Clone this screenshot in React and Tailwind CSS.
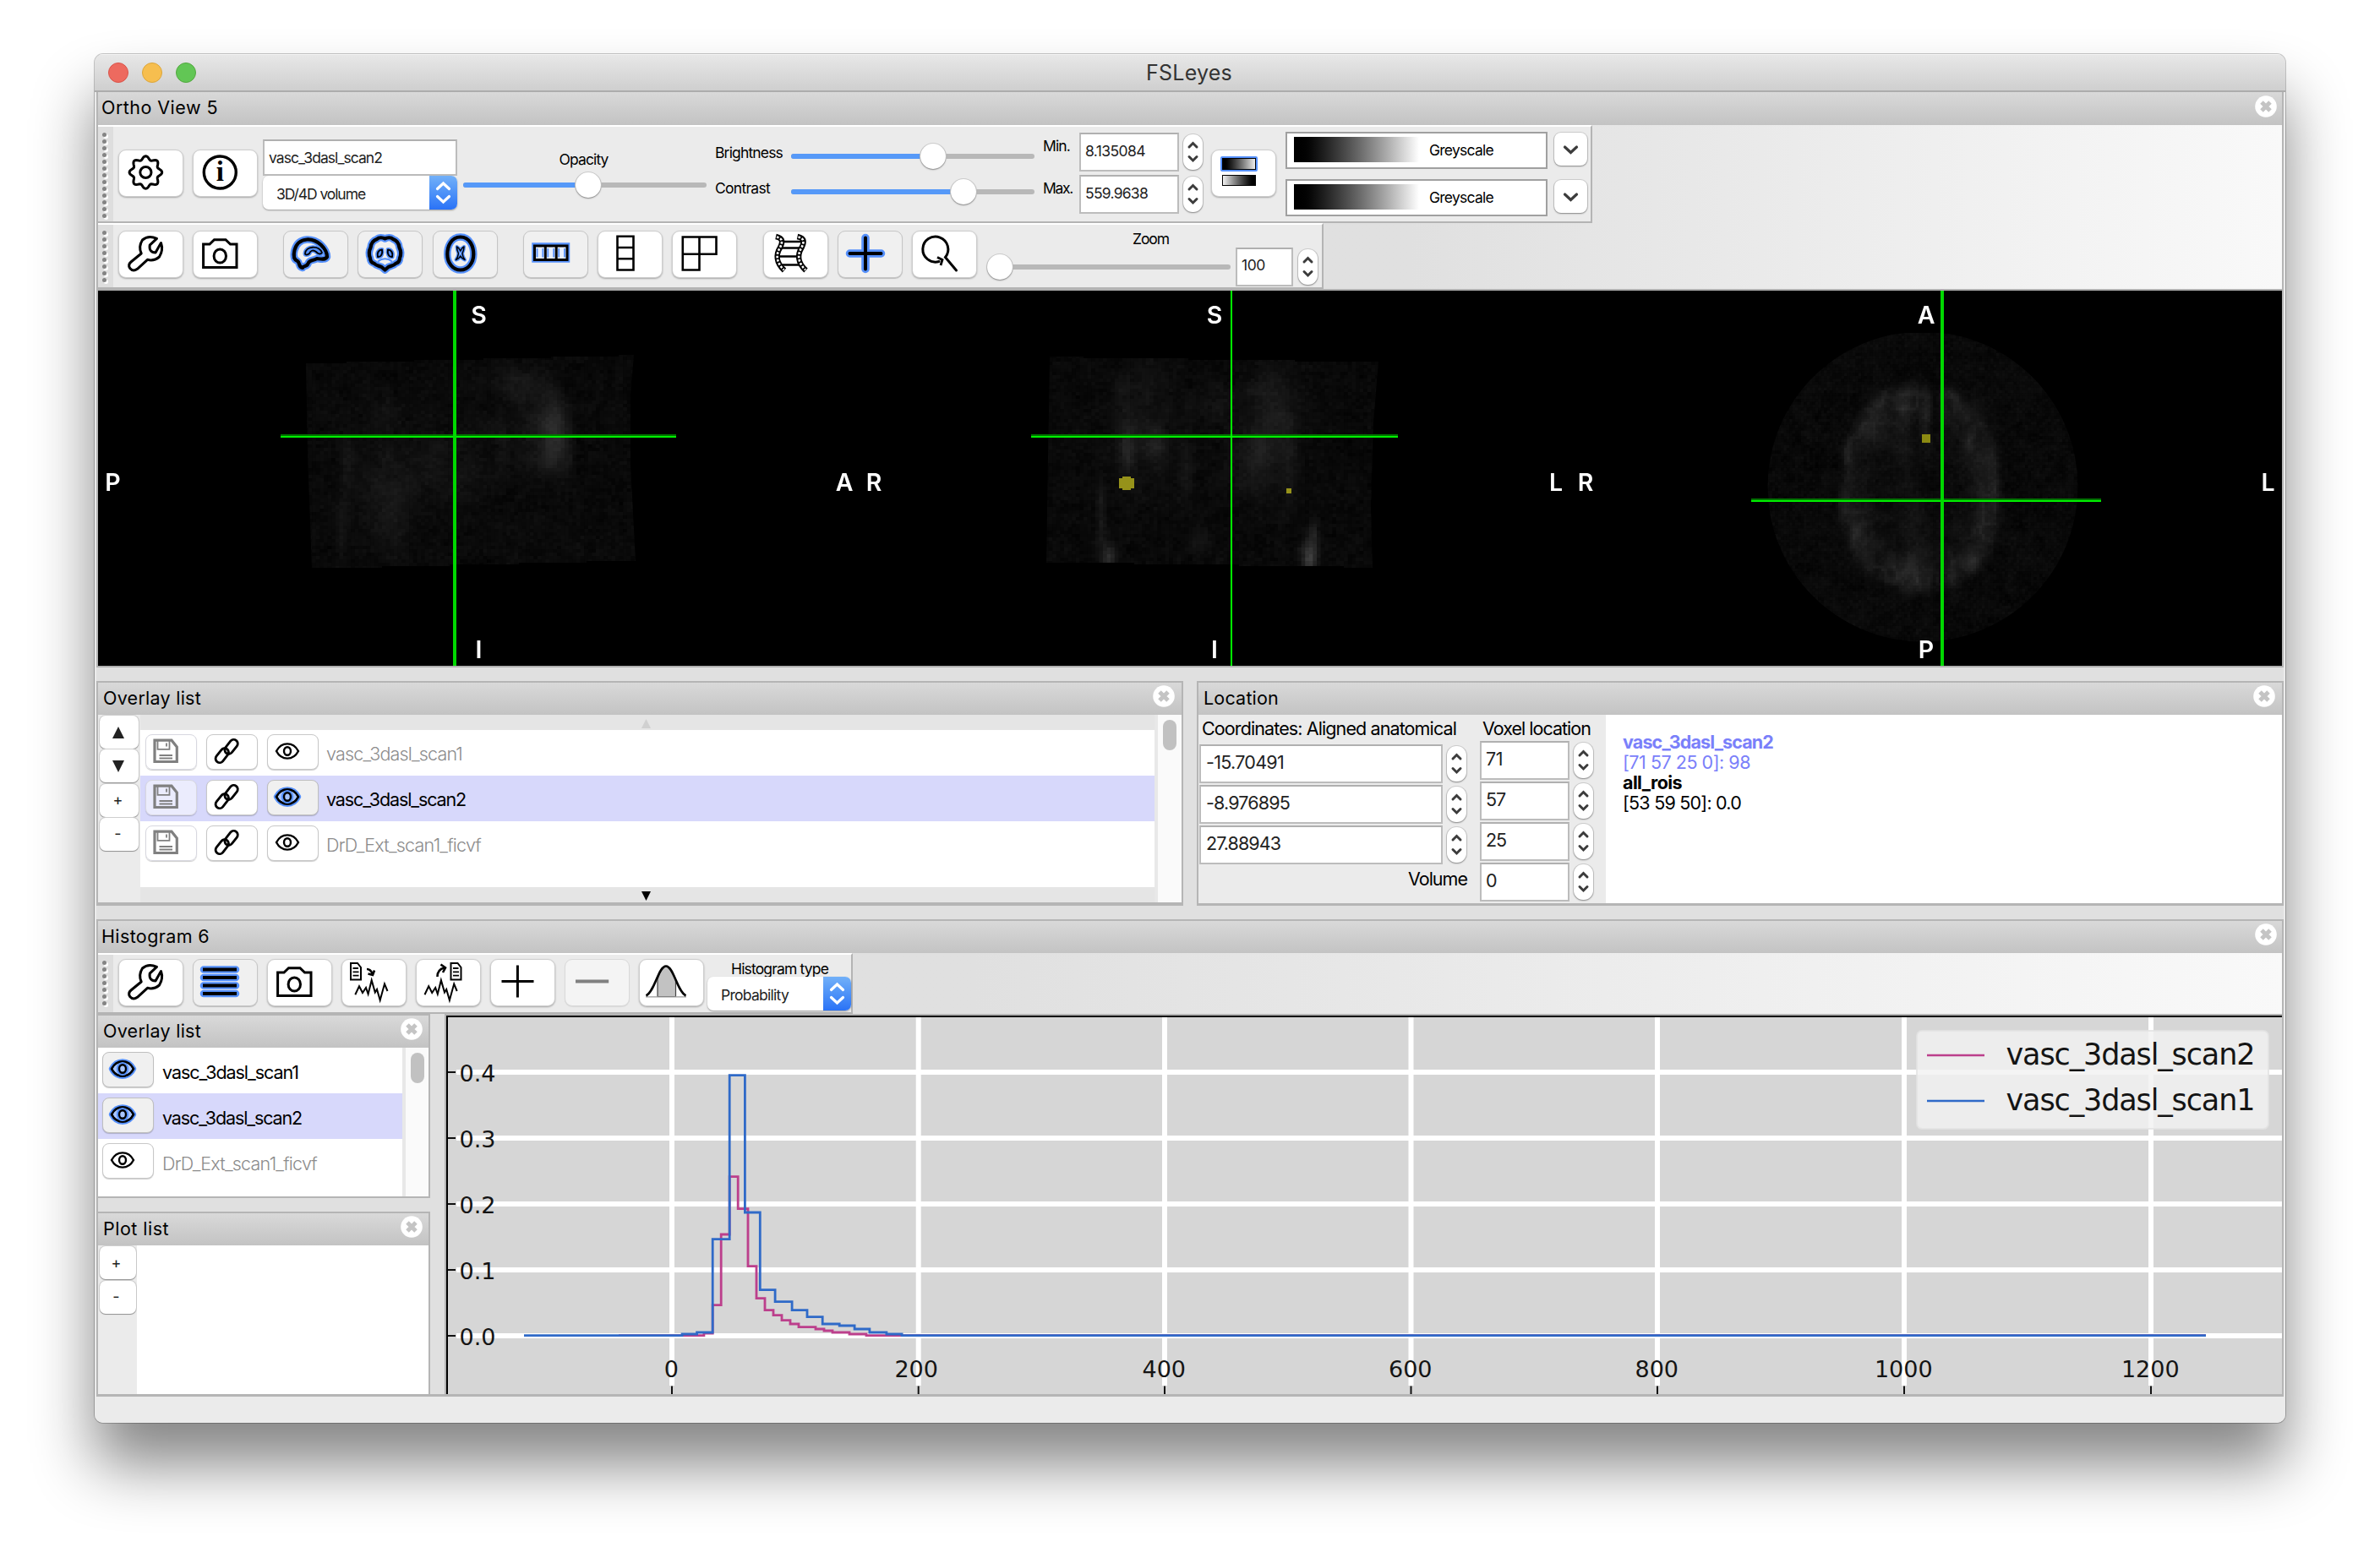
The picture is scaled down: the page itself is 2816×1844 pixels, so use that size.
import { useLayoutEffect, useEffect, useRef, useState } from "react";

const BLUE = "#5590fb";

/* Text that tracks its letters to a given ink width. */
function T({ w, className = "", children }) {
  const ref = useRef(null);
  const [ls, setLs] = useState(0);
  useLayoutEffect(() => {
    const n = String(children).length;
    const natural = ref.current.getBoundingClientRect().width - ls * n;
    if (w) setLs((w - natural) / n);
  }, [w, children]);
  return (
    <span ref={ref} className={"inline-block whitespace-nowrap leading-none " + className} style={{ letterSpacing: ls + "px" }}>
      {children}
    </span>
  );
}

function Close({ className = "" }) {
  return (
    <svg viewBox="0 0 26 26" className={"h-[26px] w-[26px] shrink-0 " + className}>
      <circle cx="13" cy="13" r="12.8" fill="#fff" />
      <path d="M8 8l10 10M18 8l-10 10" stroke="#c4c4c4" strokeWidth="5" strokeLinecap="butt" />
    </svg>
  );
}

function Header({ title, w, className = "", closeClass = "" }) {
  return (
    <div className={"flex shrink-0 items-center justify-between bg-gradient-to-b from-[#d9d9d9] to-[#c3c3c3] text-[21.5px] text-black " + className}>
      <T w={w} className="mb-[1px]">{title}</T>
      <Close className={closeClass} />
    </div>
  );
}

function Grip({ n }) {
  return (
    <div className="flex w-[18px] shrink-0 flex-col items-center self-stretch overflow-hidden bg-[#dedede] pt-[7px]">
      {Array.from({ length: n }, (_, i) => (
        <div key={i} className="h-[8px] w-[8px] shrink-0">
          <div className="h-[5px] w-[5px] rounded-full bg-[#848484] shadow-[2px_2px_0_#fff]" />
        </div>
      ))}
    </div>
  );
}

function Btn({ children, on, off, className = "" }) {
  const tone = off ? "bg-[#f4f4f4] border-[#d9d9d9] shadow-[0_1px_1px_rgba(0,0,0,0.08)]" : on ? "bg-[#f0f0f0] border-[#c6c6c6] shadow-[0_1px_1px_rgba(0,0,0,0.2)]" : "bg-white border-[#cdcdcd] shadow-[0_1px_2px_rgba(0,0,0,0.3)]";
  return (
    <div className={"h-[56px] w-[77px] shrink-0 rounded-[9px] border " + tone + " " + className}>
      <svg viewBox="1 1 75 54" className="h-[54px] w-[75px]" fill="none" stroke="#000" strokeWidth="3">
        {children}
      </svg>
    </div>
  );
}

/* A black stroke lying on a wider blue one, for toggled-on icons. */
function Glow({ d, w = 4, halo = 8.5, cap = "round" }) {
  return (
    <>
      <path d={d} stroke={BLUE} strokeWidth={halo} strokeLinejoin="round" strokeLinecap={cap} />
      <path d={d} strokeWidth={w} strokeLinejoin="round" strokeLinecap={cap} />
    </>
  );
}

const gear = Array.from({ length: 96 }, (_, i) => {
  const a = (i / 96) * Math.PI * 2;
  const r = 17.2 + 2.1 * Math.cos(8 * a);
  return (32.4 + r * Math.sin(a)).toFixed(2) + "," + (27 - r * Math.cos(a)).toFixed(2);
}).join(" ");

const Wrench = () => (
  <path strokeLinejoin="round" d="M45.5 9.3L37.2 17.2Q36 25.5 44 26L50.5 14.5Q53.5 23 48.5 31Q42 36.5 34.5 34.3L22.5 45.3Q17.5 49 13.7 44.5Q11 40.5 15 37L27.2 27Q23.5 19 28.5 11Q35.5 5 45.5 9.3Z" />
);
const Camera = () => (
  <>
    <path d="M12.6 16H20L25.5 10.7H39L44.5 16H52V43.5H12.6Z" />
    <ellipse cx="32.3" cy="30" rx="7.2" ry="8" />
  </>
);

const wave = "M16.3 42.2L21 32.2L25 40L29 34L31.6 41.5L35.7 25.2L39.8 39.5L42 36L45.7 48.8L51 29.5L54.5 38";

function Doc({ x }) {
  return (
    <g transform={"translate(" + x + " 0)"} strokeWidth="2">
      <path d="M1 5H9L13 10V24.5H1Z" />
      <path d="M3.5 11H10M3.5 15.3H10.5M3.5 19.6H10.5" strokeWidth="1.8" />
    </g>
  );
}

function Chev({ className = "" }) {
  return (
    <svg viewBox="0 0 23 42" className={"h-[42px] w-[23px] shrink-0 rounded-[11px] bg-white shadow-[0_1px_2px_rgba(0,0,0,0.35),0_0_0_1px_#cfcfcf] " + className} fill="none" stroke="#3c3c3c" strokeWidth="3">
      <path d="M7 15L11.5 10.5L16 15M7 26.5L11.5 31L16 26.5" strokeLinecap="round" />
    </svg>
  );
}

function Field({ text, w, size = "text-[21.5px]", pad = "pl-[7px] pb-[4px]", h = "h-[46px]", className = "" }) {
  return (
    <div className={"flex shrink-0 items-center border-2 border-[#bcbcbc] border-t-[#b0b0b0] bg-white text-[#222] " + h + " " + size + " " + pad + " " + className}>
      <T w={w}>{text}</T>
    </div>
  );
}

function Slider({ pos, className = "" }) {
  return (
    <div className={"relative flex h-[32px] shrink-0 items-center " + className}>
      <div className="flex h-[6px] w-full overflow-hidden rounded-full bg-[#b8b8b8]">
        <div className="h-full bg-[#5699f8]" style={{ width: pos + "px" }} />
      </div>
      <div className="absolute top-[1px] h-[30px] w-[30px] -translate-x-1/2 rounded-full bg-white shadow-[0_1px_2px_rgba(0,0,0,0.35),0_0_0_1px_#cfcfcf]" style={{ left: pos + "px" }} />
    </div>
  );
}

function Select({ text, w, className = "" }) {
  return (
    <div className={"flex h-[40px] shrink-0 items-center overflow-hidden rounded-[7px] bg-white pl-[16px] text-[17.5px] text-[#222] shadow-[0_1px_2px_rgba(0,0,0,0.35)] " + className}>
      <T w={w} className="mt-[3px]">{text}</T>
      <svg viewBox="0 0 33 40" className="ml-auto h-[40px] w-[33px] bg-gradient-to-b from-[#72b0f8] to-[#2a72f6]" fill="none" stroke="#fff" strokeWidth="3.2">
        <path d="M9.5 15.5L16.5 9L23.5 15.5M9.5 24.5L16.5 31L23.5 24.5" strokeLinecap="round" />
      </svg>
    </div>
  );
}

function ColourRow({ className = "" }) {
  return (
    <div className={"flex " + className}>
      <div className="flex h-[44px] w-[310px] items-center border-2 border-[#a0a0a0] bg-white pl-[8px] text-[17.5px] text-black">
        <div className="mb-[2px] h-[30px] w-[148px] bg-gradient-to-r from-black to-white" />
        <T w={76} className="ml-[12px]">Greyscale</T>
      </div>
      <svg viewBox="0 0 39 39" className="ml-[8px] mt-[1px] h-[39px] w-[39px] rounded-[8px] bg-white shadow-[0_1px_2px_rgba(0,0,0,0.35),0_0_0_1px_#cfcfcf]" fill="none" stroke="#3c3c3c" strokeWidth="3.2">
        <path d="M12.5 17L19.5 23.5L26.5 17" strokeLinecap="round" />
      </svg>
    </div>
  );
}

/* ---------- list pieces ---------- */
function SmallBtn({ on, faded, className = "", children }) {
  const tone = faded ? "border-[#d8d8e0] bg-white/50" : on ? "border-[#bfbfbf] bg-[#f0f0f0]" : "border-[#c8c8c8] bg-white";
  return (
    <div className={"h-[42px] w-[61px] shrink-0 rounded-[8px] border shadow-[0_1px_1px_rgba(0,0,0,0.2)] " + tone + " " + className}>
      <svg viewBox="1 1 59 40" className="h-[40px] w-[59px]" fill="none" stroke="#000" strokeWidth="2.4">
        {children}
      </svg>
    </div>
  );
}
const almond = "M11 20C17 8.5 31 8.5 37 20C31 31.5 17 31.5 11 20Z";
function EyeBtn({ on, className }) {
  return (
    <SmallBtn on={on} className={className}>
      {on && <path d={almond} fill={BLUE} stroke={BLUE} strokeWidth="6.5" strokeLinejoin="round" />}
      {on && <path d={almond} fill="#a9c6ff" />}
      <path d={almond} />
      {on && <ellipse cx="24" cy="20" rx="4.2" ry="5" stroke={BLUE} strokeWidth="6" />}
      <ellipse cx="24" cy="20" rx="4" ry="4.8" fill={on ? "#a9c6ff" : "none"} />
    </SmallBtn>
  );
}
function SaveBtn() {
  return (
    <SmallBtn faded className="ml-[6px]">
      <g stroke="#808080">
        <path d="M11 7.2H31L37.3 15V32.5H11Z" strokeWidth="3.2" />
        <path d="M14.5 7V17.8H28.5V7" strokeWidth="1.8" />
        <path d="M25 10.5V14.5M16.5 25H32M16.5 28.5H32" strokeWidth="1.8" />
      </g>
    </SmallBtn>
  );
}
function LinkBtn() {
  return (
    <SmallBtn className="ml-[11px]">
      <g strokeWidth="2.8">
        <rect x="-9.5" y="-4.8" width="19" height="9.6" rx="4.8" transform="translate(18.8 25.2) rotate(-52)" />
        <rect x="-9.5" y="-4.8" width="19" height="9.6" rx="4.8" transform="translate(29.6 14.8) rotate(-52)" />
      </g>
    </SmallBtn>
  );
}

function MiniBtn({ children, w = "w-[46px]" }) {
  return (
    <div className={"flex h-[39px] shrink-0 items-center justify-center rounded-[7px] bg-white pr-[3px] text-[18px] leading-none text-[#222] shadow-[0_1px_1px_rgba(0,0,0,0.3),0_0_0_1px_#cfcfcf] " + w}>
      {children}
    </div>
  );
}
function Tri({ down, className = "" }) {
  return (
    <svg viewBox="0 0 14 14" className={className} fill="currentColor">
      <path d={down ? "M0 0H14L7 14Z" : "M0 14H14L7 0Z"} />
    </svg>
  );
}

const items = [
  { name: "vasc_3dasl_scan1", w: 161 },
  { name: "vasc_3dasl_scan2", w: 165, sel: true },
  { name: "DrD_Ext_scan1_ficvf", w: 183 },
];

/* ---------- image slices ---------- */
function rng(seed) {
  let s = seed;
  return () => ((s = (s * 1664525 + 1013904223) >>> 0) / 4294967296);
}
/* Smooth value noise on a lattice with cells sx by sy. */
function smooth(seed, sx, sy) {
  const r = rng(seed);
  const t = Array.from({ length: 4096 }, () => r() - 0.5);
  const at = (i, j) => t[(i * 73 + j * 179) & 4095];
  const ease = (q) => q * q * (3 - 2 * q);
  return (x, y) => {
    const u = x / sx, v = y / sy, i = Math.floor(u), j = Math.floor(v), a = ease(u - i), b = ease(v - j);
    return (at(i, j) * (1 - a) + at(i + 1, j) * a) * (1 - b) + (at(i, j + 1) * (1 - a) + at(i + 1, j + 1) * a) * b;
  };
}
const blobs = (list) => (x, y) => list.reduce((t, [cx, cy, sx, sy, v]) => t + v * Math.exp(-(((x - cx) / sx) ** 2 + ((y - cy) / sy) ** 2) / 2), 0);

const sagittalBase = blobs([
  [656, 506, 10, 26, 22], [638, 495, 22, 36, 12], [664, 530, 14, 20, 10], [650, 545, 18, 12, 9], [610, 458, 22, 12, 6], [594, 525, 5, 22, 9], [600, 450, 26, 12, 5], [470, 560, 30, 40, 8], [455, 590, 22, 30, 6],
  [465, 625, 12, 22, 9], [412, 545, 6, 22, 9], [405, 625, 5, 30, 10], [550, 565, 18, 22, 9], [515, 540, 12, 30, 7], [570, 510, 20, 10, 7], [455, 490, 12, 14, 7],
]);
/* The skull edge falls off sharply on the right of the bright lobe. */
const sagittal = (x, y) => {
  const edge = 682 - ((y - 520) / 11) ** 2 * 0.55;
  const k = x > 600 ? 1 / (1 + Math.exp((x - edge) / 2)) : 1;
  return sagittalBase(x, y) * k;
};
const coronal = blobs([
  [1334, 530, 6, 25, 22], [1368, 525, 9, 13, 18], [1352, 500, 26, 50, 10], [1303, 608, 4, 30, 16], [1312, 660, 6, 10, 34], [1549, 662, 6, 16, 50], [1555, 635, 4, 16, 18],
  [1508, 485, 16, 34, 16], [1490, 538, 12, 26, 14], [1525, 545, 8, 40, 12], [1475, 555, 22, 26, 9], [1404, 558, 6, 30, 12], [1440, 480, 20, 18, 8], [1480, 462, 14, 8, 10], [1420, 640, 8, 14, 7], [1325, 465, 5, 12, 7],
]);
const extra = blobs([
  [2266, 640, 12, 40, 9], [2262, 680, 14, 14, 14], [2253, 525, 7, 40, 7], [2279, 500, 5, 24, 16], [2263, 462, 8, 5, 12], [2253, 480, 5, 14, 14], [2306, 464, 8, 6, 14], [2317, 478, 5, 12, 14],
  [2384, 634, 6, 5, 12], [2332, 664, 7, 8, 16], [2213, 512, 16, 10, 14], [2222, 482, 12, 12, 10], [2187, 540, 4, 18, 12], [2182, 600, 5, 14, 14], [2194, 640, 8, 24, 14], [2160, 567, 4, 7, 7],
  [2350, 620, 14, 36, 10], [2330, 524, 5, 14, 14], [2342, 478, 10, 6, 14], [2353, 500, 6, 16, 12], [2361, 560, 6, 40, 10], [2312, 686, 5, 14, 14], [2345, 545, 12, 14, 8],
]);
const foldNoise = smooth(91, 13, 17);
const patch = smooth(17, 12, 12);
function axial(x, y) {
  const dx = Math.abs(x - 2272) / 98;
  const dy = Math.abs(y - 578) / 128;
  const d = (dx ** 2.3 + dy ** 2.3) ** (1 / 2.3) + 0.07 * foldNoise(x * 0.8 + 300, y * 0.8);
  const inside = 1 / (1 + Math.exp((d - 0.96) / 0.02));
  const ridge = Math.max(0, 1 - Math.abs(foldNoise(x, y)) * 5);
  const cleft = Math.exp(-(((x - 2290) / 6) ** 2)) * (y < 520 ? 1 : 0.4);
  const rim = Math.exp(-(((d - 0.84) / 0.16) ** 2) / 2);
  return inside * (1 - cleft) * (1.5 + rim * 9 + ridge * (2.5 + rim * 7) + extra(x, y) * 0.9) + (inside < 0.5 ? extra(x, y) * 0.3 : 0);
}

const slices = [
  { f: sagittal, cw: 4.6, ch: 4, box: [360, 418, 756, 674], seed: 7, poly: [[362, 430], [410, 430], [410, 428], [490, 428], [490, 426], [572, 426], [572, 424], [652, 424], [652, 422], [732, 422], [732, 420], [750, 420], [746, 470], [746, 550], [752, 664], [694, 664], [694, 666], [614, 666], [614, 668], [532, 668], [532, 670], [452, 670], [452, 672], [369, 672], [364, 540]] },
  { f: coronal, cw: 4.6, ch: 4, box: [1236, 420, 1634, 674], seed: 21, poly: [[1242, 422], [1282, 422], [1282, 424], [1406, 424], [1406, 426], [1532, 426], [1532, 428], [1631, 428], [1625, 500], [1622, 600], [1624, 672], [1590, 672], [1590, 670], [1466, 670], [1466, 668], [1342, 668], [1342, 666], [1238, 666], [1240, 540]] },
  { f: axial, cw: 3.4, ch: 3.4, box: [2090, 394, 2462, 760], seed: 33, circle: [2275, 576, 183.5] },
];

function Slices() {
  const ref = useRef(null);
  useEffect(() => {
    const g = ref.current.getContext("2d");
    g.setTransform(1, 0, 0, 1, 0, 0);
    g.fillStyle = "#000";
    g.fillRect(0, 0, 2584, 444);
    g.translate(-116, -344);
    slices.forEach(({ f, cw, ch, box, seed, poly, circle }) => {
      const r = rng(seed);
      g.save();
      g.beginPath();
      if (poly) poly.forEach(([x, y], i) => (i ? g.lineTo(x, y) : g.moveTo(x, y)));
      else g.arc(circle[0], circle[1], circle[2], 0, Math.PI * 2);
      g.clip();
      for (let y = box[1]; y < box[3]; y += ch)
        for (let x = box[0]; x < box[2]; x += cw) {
          const v = Math.round(9 + (r() + r() - 1) * 5 + patch(x, y) * 6 + f(x + cw / 2, y + ch / 2));
          g.fillStyle = "rgb(" + v + "," + v + "," + v + ")";
          g.fillRect(x, y, cw + 0.6, ch + 0.6);
        }
      g.restore();
    });
  }, []);
  const letters = [
    ["S", 566.5, 383], ["P", 133.5, 580.5], ["A", 999, 581], ["I", 566.5, 778.5],
    ["R", 1034, 581], ["S", 1437, 383], ["L", 1841, 581], ["I", 1437, 778.5],
    ["R", 1876, 581], ["A", 2279, 383], ["P", 2279, 778.5], ["L", 2683.5, 581],
  ];
  return (
    <div className="relative h-[444px] w-[2584px] shrink-0 bg-black">
      <canvas ref={ref} width="2584" height="444" className="block" />
      <svg viewBox="116 344 2584 444" className="absolute inset-0 h-[444px] w-[2584px]">
        <g fill="#96921a">
          <path d="M1328 564H1338V566H1342V578H1338V580H1328V578H1324V566H1328Z" />
          <rect x="1522" y="578" width="6" height="6" />
          <rect x="2274" y="514" width="10" height="10" fill="#8c8a12" />
        </g>
        <g fill="#007400">
          <rect x="332" y="514" width="468" height="2" />
          <rect x="1220" y="514" width="434" height="2" />
          <rect x="2072" y="590" width="414" height="2" />
        </g>
        <g fill="#00f000">
          <rect x="332" y="516" width="468" height="2" />
          <rect x="1220" y="516" width="434" height="2" />
          <rect x="2072" y="592" width="414" height="2" />
          <rect x="1456" y="344" width="2" height="444" fill="#00ff00" />
        </g>
        <g fill="#00d800">
          <rect x="536" y="344" width="4" height="444" />
          <rect x="2296" y="344" width="4" height="444" />
        </g>
        <g fill="#fff" textAnchor="middle" className="font-['Inter'] text-[28.5px] font-semibold">
          {letters.map(([c, x, y], i) => (
            <text key={i} x={x} y={y}>{c}</text>
          ))}
        </g>
      </svg>
    </div>
  );
}

/* ---------- histogram ---------- */
const path = (x0, steps, end) => {
  let y = 1142;
  let d = "M" + x0 + " 1580.7";
  steps.forEach(([x, ny]) => {
    const X = (600 + x / 2.8).toFixed(1);
    d += "L" + X + " " + (1200 + y / 3).toFixed(1) + "L" + X + " " + (1200 + ny / 3).toFixed(1);
    y = ny;
  });
  return d + "H" + end;
};
const blueD = path(620, [[580, 1137], [629, 1131], [681, 800], [737, 218], [788, 705], [838, 980], [888, 1022], [944, 1052], [994, 1076], [1045, 1101], [1101, 1107], [1151, 1119], [1201, 1131], [1257, 1137], [1308, 1142]], 2610);
const pinkD = path(732, [[652, 1134], [681, 1034], [709, 783], [737, 578], [765, 692], [798, 896], [826, 1010], [854, 1052], [882, 1070], [910, 1088], [938, 1101], [966, 1112], [1022, 1119], [1050, 1125], [1078, 1131], [1134, 1137], [1190, 1142]], 2610);

function Plot() {
  const xs = [[0, 795], [200, 1086.7], [400, 1378], [600, 1669.5], [800, 1961], [1000, 2253], [1200, 2545]];
  const ys = ["0.4", "0.3", "0.2", "0.1", "0.0"];
  return (
    <svg viewBox="528 1202 2172 448" className="h-[448px] w-[2172px] shrink-0 bg-[#d6d6d6] font-['DejaVu_Sans']">
      <g stroke="#fff" strokeWidth="6">
        {xs.map(([v, x]) => <path key={v} d={"M" + x + " 1204V1640"} />)}
        {ys.map((v, i) => <path key={v} d={"M540 " + (1269 + i * 78) + "H2700"} />)}
      </g>
      <g fill="none" strokeWidth="2.8">
        <path d={pinkD} stroke="#bc3f8c" />
        <path d={blueD} stroke="#2f6ac8" />
      </g>
      <g stroke="#111" strokeWidth="2">
        {xs.map(([v, x]) => <path key={v} d={"M" + x + " 1640.5V1650"} />)}
        {ys.map((v, i) => <path key={v} d={"M530 " + (1269 + i * 78) + "H539"} />)}
      </g>
      <g fill="#141414" className="text-[27px]">
        {xs.map(([v, x]) => <text key={v} x={v === 200 ? x - 2.5 : x - 0.7} y="1630" textAnchor="middle">{v}</text>)}
        {ys.map((v, i) => <text key={v} x="543.5" y={1280 + i * 78} textLength="43">{v}</text>)}
      </g>
      <rect x="2268" y="1220" width="416" height="116" rx="6" fill="#f2f2f2" fillOpacity="0.82" stroke="#e2e2e2" strokeOpacity="0.8" strokeWidth="2" />
      <path d="M2280 1249H2348" stroke="#bc3f8c" strokeWidth="2.6" />
      <path d="M2280 1303H2348" stroke="#2f6ac8" strokeWidth="2.6" />
      <g fill="#141414" className="text-[35px]">
        <text x="2373.5" y="1260" textLength="295">vasc_3dasl_scan2</text>
        <text x="2373.5" y="1314" textLength="295">vasc_3dasl_scan1</text>
      </g>
      <path d="M528 1203H2700M529 1202V1650" stroke="#000" strokeWidth="2" />
    </svg>
  );
}

export default function App() {
  return (
    <div className="h-[1844px] w-[2816px] overflow-hidden bg-white pl-[112px] pt-[64px] font-['Inter',sans-serif] text-black">
      <div className="flex h-[1620px] w-[2592px] flex-col overflow-hidden rounded-[10px] bg-[#ebebeb] shadow-[0_50px_72px_rgba(0,0,0,0.48),0_0_0_1px_rgba(0,0,0,0.22)]">
        {/* title bar */}
        <div className="flex h-[45px] shrink-0 items-center border-b-2 border-[#acacac] bg-gradient-to-b from-[#e8e8e8] to-[#cfcfcf] shadow-[inset_0_1px_0_#f4f4f4]">
          <div className="flex w-[400px] gap-[16px] pl-[16px]">
            <div className="h-[24px] w-[24px] rounded-full border border-[#d9544a] bg-[#ed6a5f]" />
            <div className="h-[24px] w-[24px] rounded-full border border-[#dba53a] bg-[#f6be4f]" />
            <div className="h-[24px] w-[24px] rounded-full border border-[#52a73f] bg-[#62c655]" />
          </div>
          <div className="flex flex-1 justify-center pr-[2px] pt-[2px] text-[25px] text-[#333]">
            <T w={102}>FSLeyes</T>
          </div>
          <div className="w-[400px]" />
        </div>

        <div className="mx-[2px] flex flex-1 flex-col bg-[#e0e0e0]">
          {/* ortho view */}
          <div className="flex flex-col border-x-2 border-[#b5b5b5]">
            <Header title="Ortho View 5" w={138} className="h-[39px] pl-[4px]" closeClass="mr-[6px] mb-[5px]" />
            <div className="flex flex-col bg-gradient-to-r from-[#e0e0e0] from-60% to-[#f9f9f9]">
              <div className="flex h-[116px] w-[1768px] items-start border-2 border-b-[#b4b4b4] border-l-0 border-r-[#b4b4b4] border-t-white bg-[#ebebeb]">
                <Grip n={13} />
                <Btn className="ml-[6px] mt-[27px]">
                  <polygon points={gear} />
                  <ellipse cx="32.4" cy="27" rx="6.6" ry="6.6" />
                </Btn>
                <Btn className="ml-[11px] mt-[27px]">
                  <circle cx="32.3" cy="27" r="19" strokeWidth="3.4" />
                  <text x="32.3" y="37.3" textAnchor="middle" stroke="none" fill="#000" className="font-['Liberation_Serif'] text-[33px] font-bold">i</text>
                </Btn>
                <div className="ml-[6px] mt-[15px] flex w-[230px] flex-col">
                  <Field text="vasc_3dasl_scan2" w={134} size="text-[17.5px]" pad="pl-[5px]" h="h-[43px]" />
                  <Select text="3D/4D volume" w={105} />
                </div>
                <div className="ml-[7px] mt-[28px] flex w-[288px] flex-col items-center text-[17.5px]">
                  <div className="flex h-[20px] items-center pr-[3px] pt-[1px]"><T w={58}>Opacity</T></div>
                  <Slider pos={148} className="mt-[5px] w-full" />
                </div>
                <div className="ml-[10px] mt-[20px] flex w-[90px] flex-col text-[17.5px]">
                  <div className="flex h-[22px] items-center"><T w={80}>Brightness</T></div>
                  <div className="mt-[20px] flex h-[22px] items-center"><T w={65}>Contrast</T></div>
                </div>
                <div className="mt-[19px] flex w-[288px] flex-col">
                  <Slider pos={168} className="w-full" />
                  <Slider pos={204} className="mt-[10px] w-full" />
                </div>
                <div className="ml-[10px] mt-[12px] flex w-[43px] flex-col text-[17.5px]">
                  <div className="flex h-[22px] items-center"><T w={32}>Min.</T></div>
                  <div className="mt-[28px] flex h-[22px] items-center"><T w={35}>Max.</T></div>
                </div>
                <div className="mt-[7px] flex w-[118px] flex-col gap-[4px]">
                  <Field text="8.135084" w={71} size="text-[17.5px]" pad="pl-[5px] pb-[3px]" />
                  <Field text="559.9638" w={74} size="text-[17.5px]" pad="pl-[5px] pb-[3px]" />
                </div>
                <div className="ml-[5px] mt-[9px] flex flex-col gap-[8px]">
                  <Chev />
                  <Chev />
                </div>
                <div className="ml-[10px] mt-[27px] h-[56px] w-[77px] rounded-[9px] border border-[#cdcdcd] bg-white pl-[10px] pt-[7px] shadow-[0_1px_2px_rgba(0,0,0,0.3)]">
                  <div className="h-[18px] w-[44px] rounded-[2px] border-2 border-[#5590fb] bg-[#5590fb]">
                    <div className="h-[14px] w-[40px] border border-black bg-gradient-to-r from-black to-[#eee]" />
                  </div>
                  <div className="ml-[2px] mt-[4px] h-[13px] w-[40px] border border-black bg-gradient-to-r from-[#f4f4f4] to-black" />
                </div>
                <div className="ml-[11px] mt-[6px] flex flex-col">
                  <ColourRow />
                  <ColourRow className="mt-[12px]" />
                </div>
              </div>

              <div className="flex h-[78px] w-[1450px] items-start border-2 border-b-[#b4b4b4] border-l-0 border-r-[#b4b4b4] border-t-white bg-[#ebebeb]">
                <Grip n={8} />
                <Btn className="ml-[6px] mt-[7px]"><Wrench /></Btn>
                <Btn className="ml-[11px] mt-[7px]"><Camera /></Btn>
                <Btn on className="ml-[30px] mt-[7px]">
                  <Glow d="M13.5 23C16 14 22 11 28 10.5C34 10 41 13 45 17C49 21 52 26 52 31C50 35 44 33.5 40 33C35 36 31 34 29.5 39C28 43 24 41 23 44C18 43 20 38 17 36C12 34 12 29 13.5 23Z" w={4.2} />
                  <Glow d="M26 27C27 18 42 17 46 26C44 29 41 27 39 25C35 22 32 24 31 27C29 29 26 29 26 27Z" w={1.8} halo={5} />
                </Btn>
                <Btn on className="ml-[11px] mt-[7px]">
                  <Glow d="M32.5 9.5C30 8 25.5 7.5 23 10C18.5 11.5 16 15.500 15.500 20C13.5 24 13.5 29 15 32.500C15 36 17 38 20 39C22.500 42 26 41.500 28.500 43L32.500 46.500L36.500 43C39 41.500 42.500 42 45 39C48 38 50 36 50 32.500C51.500 29 51.500 24 49.500 20C49 15.500 46.500 11.500 42 10C39.500 7.500 35 8 32.5 9.5Z" w={4.2} />
                  <path d="M24 36.500Q32.500 30 41 36.500" stroke={BLUE} strokeWidth="2" />
                  <Glow d="M24 31C22.500 26 25.500 22.500 29 22.500C30 27 28 31.500 24 31ZM41 31C42.500 26 39.500 22.500 36 22.500C35 27 37 31.500 41 31Z" w={2} halo={5} />
                </Btn>
                <Btn on className="ml-[12px] mt-[7px]">
                  <Glow d="M32.8 7.5C44 7.5 48.3 19 48.3 28C48.3 38 42 46.5 32.8 46.5C23.6 46.5 17.3 38 17.3 28C17.3 19 21.6 7.5 32.8 7.5Z" w={4.2} />
                  <Glow d="M28.500 19Q31.500 20.500 32.8 24Q34 20.500 37 19Q37 23 35 27Q35.500 31 38 34.500Q34.500 33.5 32.8 30Q31 33.5 27.500 34.5Q30 31 30.500 27Q28.500 23 28.500 19Z" w={1.5} halo={4} />
                </Btn>
                <Btn on className="ml-[30px] mt-[7px]">
                  <rect x="12" y="16" width="41.5" height="20" stroke={BLUE} strokeWidth="3.5" fill="#8fb5ff" />
                  <path d="M13.5 18H52V34.5H13.5ZM26.3 18V34.5M39.2 18V34.5" fill="#e8effd" strokeWidth="3" />
                  <path d="M16.5 21V31.5M23.3 21V31.5M29.3 21V31.5M36.2 21V31.5M42.2 21V31.5M49 21V31.5" stroke={BLUE} strokeWidth="1.8" />
                </Btn>
                <Btn className="ml-[11px] mt-[7px]">
                  <path d="M23.5 6.8H42.5V46.5H23.5ZM23.5 20H42.5M23.5 33.3H42.5" strokeWidth="2.6" />
                </Btn>
                <Btn className="ml-[11px] mt-[7px]">
                  <path d="M12.8 7.5H52.5V27.7H12.8ZM32.5 7.5V46.5H12.8V27.7" strokeWidth="2.6" />
                </Btn>
                <Btn className="ml-[31px] mt-[7px]">
                  <path d="M20 13H46M22 20.5H47M18 30.5H44M18 40.5H44" strokeWidth="2.6" />
                  {[0, 25.5].map((x) => (
                    <g key={x} transform={"translate(" + x + " 0)"}>
                      <path d="M15 7C24 9 23 14 20 20C15 28 15 38 25 47" strokeWidth="6.5" />
                      <path d="M16 7.5C24 9.5 22.5 14 20 20C15 28 15 37 24.5 46.5" stroke="#fff" strokeWidth="2.6" strokeDasharray="2.6 1.8" />
                    </g>
                  ))}
                </Btn>
                <Btn on className="ml-[11px] mt-[7px]">
                  <Glow d="M33 8.5V45.5M14.5 27H51.5" w={4} halo={9.5} />
                </Btn>
                <Btn className="ml-[11px] mt-[7px]">
                  <path d="M32 36.5A15 15 0 1 1 39.5 31.5L52.5 47" strokeLinecap="round" strokeWidth="3" />
                  <path d="M30 31.5L36 34.5L34 41" strokeWidth="2.8" />
                </Btn>
                <div className="ml-[10px] mt-[8px] flex w-[290px] flex-col text-[17.5px]">
                  <div className="flex h-[18px] items-center pl-[174px]"><T w={43}>Zoom</T></div>
                  <div className="pl-[2px]">
                    <div className="relative mt-[8px] flex h-[32px] items-center pl-[14px]">
                      <div className="h-[6px] w-[274px] rounded-full bg-[#b8b8b8]" />
                      <div className="absolute left-0 top-[1px] h-[30px] w-[30px] rounded-full bg-white shadow-[0_1px_2px_rgba(0,0,0,0.35),0_0_0_1px_#cfcfcf]" />
                    </div>
                  </div>
                </div>
                <Field text="100" w={28} size="text-[17.5px]" pad="pl-[5px] pb-[4px]" className="ml-[6px] mt-[27px] w-[68px]" />
                <Chev className="ml-[6px] mt-[29px]" />
              </div>
              <div className="h-[2px] w-full bg-[#b0b0b0]" />
            </div>
            <Slices />
            <div className="h-[2px] bg-[#b0b0b0]" />
          </div>

          {/* middle panels */}
          <div className="mt-[16px] flex h-[266px] shrink-0 justify-between">
            <div className="flex w-[1286px] flex-col border-2 border-b-4 border-[#b5b5b5]">
              <Header title="Overlay list" w={116} className="h-[38px] pl-[6px]" closeClass="mr-[8px] mb-[6px]" />
              <div className="flex flex-1 bg-[#ebebeb]">
                <div className="flex w-[50px] flex-col items-center gap-[1.3px] pt-[1px]">
                  <MiniBtn><Tri className="h-[14px] w-[14px]" /></MiniBtn>
                  <MiniBtn><Tri down className="h-[14px] w-[14px]" /></MiniBtn>
                  <MiniBtn>+</MiniBtn>
                  <MiniBtn>-</MiniBtn>
                </div>
                <div className="flex w-[1200px] flex-col bg-[#e5e5e5]">
                  <div className="flex h-[18px] items-center justify-center pr-[3px] pt-[3px] text-[#d0d0d0]"><Tri className="h-[11px] w-[11px]" /></div>
                  <div className="h-[186px] bg-white">
                    {items.map((it) => (
                      <div key={it.name} className={"flex h-[54px] items-start pt-[5px] " + (it.sel ? "bg-[#d7d8fb]" : "bg-white")}>
                        <SaveBtn />
                        <LinkBtn />
                        <EyeBtn on={it.sel} className="ml-[11px]" />
                        <div className={"ml-[9px] mt-[13px] flex text-[21.5px] " + (it.sel ? "text-black" : "font-light text-[#8c8c8c]")}><T w={it.w}>{it.name}</T></div>
                      </div>
                    ))}
                  </div>
                  <div className="flex h-[18px] items-center justify-center pr-[3px] pt-[2px] text-black"><Tri down className="h-[11px] w-[11px]" /></div>
                </div>
                <div className="w-[4px] bg-[#e8e8e8]" />
                <div className="flex flex-1 justify-center bg-[#fafafa] pt-[6px]"><div className="h-[36px] w-[16px] rounded-full bg-[#c1c1c1]" /></div>
              </div>
            </div>

            <div className="flex w-[1286px] flex-col border-2 border-b-4 border-[#b5b5b5]">
              <Header title="Location" w={89} className="h-[38px] pl-[6px]" closeClass="mr-[8px] mb-[6px]" />
              <div className="flex flex-1 bg-[#ebebeb] text-[21.5px]">
                <div className="flex w-[318px] flex-col">
                  <div className="flex h-[35px] items-center pb-[2px] pl-[4px]"><T w={301}>Coordinates: Aligned anatomical</T></div>
                  {[["-15.70491", 92], ["-8.976895", 99], ["27.88943", 88]].map(([t, w]) => (
                    <div key={t} className="mb-[2px] flex">
                      <Field text={t} w={w} pad="pl-[6px] pb-[3px]" className="ml-[1px] w-[288px]" />
                      <Chev className="ml-[5px] mt-[2px]" />
                    </div>
                  ))}
                  <div className="flex h-[32px] items-center justify-end"><T w={70}>Volume</T></div>
                </div>
                <div className="ml-[14px] flex w-[150px] flex-col">
                  <div className="flex h-[31px] shrink-0 items-center pl-[4px] pt-[2px]"><T w={128}>Voxel location</T></div>
                  {[["71", 20], ["57", 23], ["25", 24], ["0", 13]].map(([t, w]) => (
                    <div key={t} className="mb-[2px] flex">
                      <Field text={t} w={w} pad="pl-[5px] pb-[3px]" className="ml-[1px] w-[106px]" />
                      <Chev className="ml-[5px] mt-[2px]" />
                    </div>
                  ))}
                </div>
                <div className="flex flex-1 flex-col bg-white pl-[20px] pt-[21px]">
                  <div className="flex h-[24px] items-center font-bold text-[#7a80fa]"><T w={178}>vasc_3dasl_scan2</T></div>
                  <div className="flex h-[24px] items-center text-[#7a80fa]"><T w={151}>[71 57 25 0]: 98</T></div>
                  <div className="flex h-[24px] items-center font-bold"><T w={70}>all_rois</T></div>
                  <div className="flex h-[24px] items-center"><T w={140}>[53 59 50]: 0.0</T></div>
                </div>
              </div>
            </div>
          </div>

          {/* histogram view */}
          <div className="mt-[16px] flex h-[565px] shrink-0 flex-col border-2 border-b-[3px] border-[#b5b5b5]">
            <Header title="Histogram 6" w={128} className="h-[38px] pl-[4px]" closeClass="mr-[6px] mb-[6px]" />
            <div className="flex h-[72px] bg-gradient-to-r from-[#e0e0e0] from-40% to-[#f9f9f9]">
              <div className="flex h-[72px] w-[893px] items-start border-2 border-b-[#b4b4b4] border-l-0 border-r-[#b4b4b4] border-t-white bg-[#ebebeb]">
                <Grip n={7} />
                <Btn className="ml-[6px] mt-[5px]"><Wrench /></Btn>
                <Btn on className="ml-[11px] mt-[5px]">
                  <path d="M13 12.4H51M13 22H51M13 31.5H51M13 41H51" stroke={BLUE} strokeWidth="8.5" strokeLinecap="round" />
                  <path d="M12 12.4H52M12 22H52M12 31.5H52M12 41H52" strokeWidth="4" />
                </Btn>
                <Btn className="ml-[11px] mt-[5px]"><Camera /></Btn>
                <Btn className="ml-[11px] mt-[5px]">
                  <Doc x={10} />
                  <path d="M30 12Q34.5 12 36.5 17.5M31.5 17.5L37 19L39 13.5" strokeWidth="2.6" />
                  <path d={wave} strokeWidth="2" />
                </Btn>
                <Btn className="ml-[11px] mt-[5px]">
                  <Doc x={40.5} />
                  <path d="M25.5 21Q25.5 12.5 33.5 10.5M29.5 6.5L35 10.5L32 16" strokeWidth="2.6" />
                  <path d={wave} strokeWidth="2" transform="translate(-5.8 0)" />
                </Btn>
                <Btn className="ml-[11px] mt-[5px]"><path d="M32.4 7.5V45.5M13.5 26.5H51.5" /></Btn>
                <Btn off className="ml-[11px] mt-[5px]"><path d="M13 26.5H52.2" stroke="#808080" strokeWidth="3.8" /></Btn>
                <Btn className="ml-[11px] mt-[5px]">
                  <path d="M22 44.5V24Q27 8.5 32 8.5Q37 8.5 43.5 24V44.5Z" fill="#c2c2c2" stroke="#444" strokeWidth="1.2" />
                  <path d="M8 44.8H56" stroke="#999" strokeWidth="1.2" />
                  <path d="M8.5 43.5C19 38 23 8.5 32 8.5C41 8.5 45 38 55.5 43.5" strokeWidth="2.6" />
                </Btn>
                <div className="ml-[4px] flex flex-col pt-[6px] text-[17.5px]">
                  <div className="flex h-[20px] items-center pl-[28px] pt-[1px]"><T w={115}>Histogram type</T></div>
                  <Select text="Probability" w={80} className="w-[170px]" />
                </div>
              </div>
            </div>

            <div className="flex h-[450px] shrink-0">
              <div className="-ml-[2px] flex w-[395px] flex-col">
                <div className="flex h-[218px] flex-col border-2 border-[#b5b5b5]">
                  <Header title="Overlay list" w={116} className="h-[38px] pl-[6px]" closeClass="mr-[7px] mb-[6px]" />
                  <div className="flex flex-1 bg-white">
                    <div className="w-[360px]">
                      {items.map((it, i) => (
                        <div key={it.name} className={"flex h-[54px] items-start pt-[5px] " + (it.sel ? "bg-[#d7d8fb]" : "bg-white")}>
                          <EyeBtn on={i < 2} className="ml-[5px]" />
                          <div className={"ml-[10px] mt-[14px] flex text-[21.5px] " + (i < 2 ? "text-black" : "font-light text-[#8c8c8c]")}><T w={it.w}>{it.name}</T></div>
                        </div>
                      ))}
                    </div>
                    <div className="w-[4px] bg-[#e8e8e8]" />
                    <div className="flex flex-1 justify-center bg-[#fafafa] pt-[6px]"><div className="h-[36px] w-[16px] rounded-full bg-[#c1c1c1]" /></div>
                  </div>
                </div>
                <div className="mt-[16px] flex h-[216px] flex-col border-2 border-b-0 border-[#b5b5b5]">
                  <Header title="Plot list" w={78} className="h-[38px] pl-[6px]" closeClass="mr-[7px] mb-[6px]" />
                  <div className="flex flex-1 bg-white">
                    <div className="flex w-[46px] flex-col items-center gap-[1.5px] bg-[#ebebeb] pt-[1px]">
                      <MiniBtn w="w-[43px]">+</MiniBtn>
                      <MiniBtn w="w-[43px]">-</MiniBtn>
                    </div>
                  </div>
                </div>
              </div>
              <div className="ml-[17px] flex flex-1 flex-col border-l-2 border-t-2 border-[#b5b5b5]">
                <Plot />
              </div>
            </div>
          </div>
        </div>
        <div className="h-[31px] shrink-0 bg-[#ebebeb]" />
      </div>
    </div>
  );
}
